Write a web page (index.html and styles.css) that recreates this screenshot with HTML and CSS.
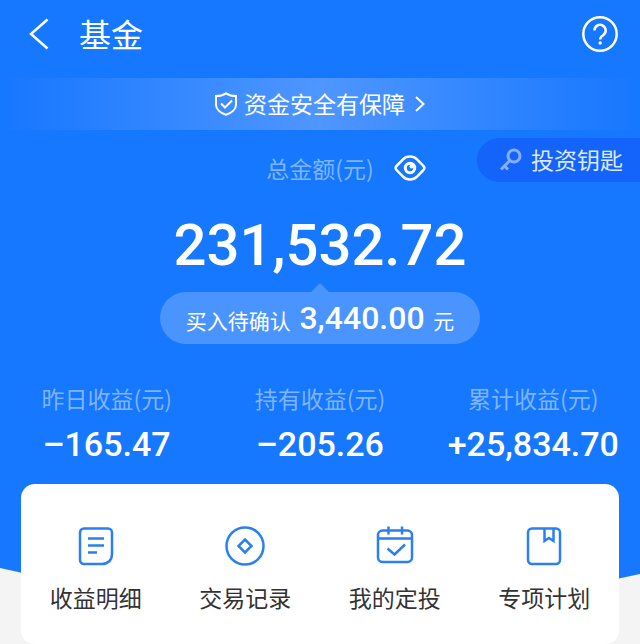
FILE: index.html
```
<!DOCTYPE html>
<html lang="zh-CN">
<head>
    <meta charset="UTF-8">
    <meta name="viewport" content="width=device-width, initial-scale=1.0">
    <title>基金</title>
    <link rel="stylesheet" href="styles.css">
</head>
<body>
    <main class="page">
        <header class="topbar">
            <button class="icon-btn" type="button" aria-label="返回">
                <svg width="20" height="32" viewBox="0 0 20 32"><path d="M18.500 1.500L2 16l16.500 14.500"/></svg>
            </button>
            <h1>基金</h1>
            <button class="icon-btn help" type="button" aria-label="帮助">
                <svg width="38" height="38" viewBox="0 0 38 38">
                    <circle cx="19" cy="19" r="16.700"/>
                    <path d="M13.500 15.500a5.600 5.600 0 1 1 8.600 4.700c-2 1.300-3 2.200-3 4.400"/>
                    <circle class="solid" cx="19.200" cy="28" r="1.700"/>
                </svg>
            </button>
        </header>

        <a class="safety" href="#">
            <svg width="24" height="24" viewBox="0 0 24 24">
                <path d="M12 1.300c3 2 6.500 2.800 10 2.800v8.600c0 4.500-4.500 8.300-10 10-5.500-1.700-10-5.500-10-10V4.100c3.500 0 7-.8 10-2.800z"/>
                <path d="M7 11.500l4 4 7-7"/>
            </svg>
            <span>资金安全有保障</span>
            <svg class="arrow" width="12" height="18" viewBox="0 0 12 18"><path d="M2 2l7.500 7L2 16"/></svg>
        </a>

        <section class="total">
            <div class="total-label">
                <span>总金额(元)</span>
                <button class="icon-btn" type="button" aria-label="隐藏金额">
                    <svg width="32" height="26" viewBox="0 0 32 26">
                        <path d="M1.500 13c0-1 .7-1.700 1.500-2.500L9 4.300C11 2.300 13 1.500 16 1.500s5 .8 7 2.800l6 6.200c.8.800 1.500 1.500 1.500 2.500s-.7 1.700-1.500 2.500l-6 6.200c-2 2-4 2.800-7 2.800s-5-.8-7-2.800l-6-6.200C2.200 14.700 1.500 14 1.500 13z"/>
                        <circle class="pupil" cx="16" cy="13" r="4.700"/>
                        <circle class="solid" cx="17.500" cy="11.500" r="2"/>
                    </svg>
                </button>
            </div>
            <button class="key-btn" type="button">
                <svg width="24" height="26" viewBox="0 0 24 26"><circle cx="15" cy="9" r="6"/><path d="M10.800 13.500L2 22.500M5.500 19l3.500 3.500"/></svg>
                <span>投资钥匙</span>
            </button>
            <p class="amount">231,532.72</p>
            <p class="pending">买入待确认 <b>3,440.00</b> 元</p>
        </section>

        <dl class="stats">
            <div>
                <dt>昨日收益(元)</dt>
                <dd>–165.47</dd>
            </div>
            <div>
                <dt>持有收益(元)</dt>
                <dd>–205.26</dd>
            </div>
            <div>
                <dt>累计收益(元)</dt>
                <dd>+25,834.70</dd>
            </div>
        </dl>

        <div class="bottom">
            <svg class="curve" viewBox="0 0 640 120" preserveAspectRatio="none"><path d="M0 0H640V90Q330 160 0 84z"/></svg>
            <nav class="menu">
                <a href="#">
                    <svg width="40" height="40" viewBox="0 0 40 40">
                        <path d="M8 2.500h24a4 4 0 0 1 4 4V28c0 6-4 10-10 10H8a4 4 0 0 1-4-4V6.500a4 4 0 0 1 4-4z"/>
                        <path d="M12 12.500h16M12 19.500h16M12 26.500h9"/>
                    </svg>
                    <span>收益明细</span>
                </a>
                <a href="#">
                    <svg width="40" height="40" viewBox="0 0 40 40">
                        <circle cx="20" cy="20" r="18.500"/>
                        <path d="M20 13.500l6.500 6.500-6.500 6.500-6.500-6.500z"/>
                    </svg>
                    <span>交易记录</span>
                </a>
                <a href="#">
                    <svg width="40" height="40" viewBox="0 0 40 40">
                        <rect x="3" y="4.500" width="34" height="31.500" rx="4.500"/>
                        <path d="M3 12.500h34M13.500 .500v8M27 .500v8M12.500 22.500l7 6L30 18.500"/>
                    </svg>
                    <span>我的定投</span>
                </a>
                <a href="#">
                    <svg width="40" height="40" viewBox="0 0 40 40">
                        <rect x="4" y="2.500" width="32" height="35.500" rx="4"/>
                        <path d="M20.500 2.500v12.500l4.500-3 4.500 3V2.500"/>
                    </svg>
                    <span>专项计划</span>
                </a>
            </nav>
        </div>
    </main>
</body>
</html>
```
FILE: styles.css
```
* {
    box-sizing: border-box;
}

body {
    margin: 0;
    background: #f4f4f4;
    color: #fff;
    font-family: "Noto Sans CJK SC", sans-serif;
    font-size: 23px;
    line-height: 32px;
}

h1, p, dl, dd {
    margin: 0;
}

a {
    color: inherit;
    text-decoration: none;
}

button {
    padding: 0;
    border: 0;
    background: none;
    color: inherit;
    font: inherit;
    cursor: pointer;
}

svg {
    display: block;
    flex: none;
    fill: none;
    stroke: currentColor;
    stroke-width: 2.5;
}

.page {
    background: linear-gradient(#1677ff, #1677ff) no-repeat 0 0 / 100% 484px;
}

/* top bar */
.topbar {
    display: flex;
    align-items: center;
    height: 78px;
    padding: 0 21px 10px 29px;
}

.topbar h1 {
    margin-left: 30px;
    padding-bottom: 2px;
    font-size: 32px;
    font-weight: 400;
}

.help {
    margin-left: auto;
}

.solid {
    fill: currentColor;
    stroke: none;
}

.safety {
    display: flex;
    align-items: center;
    justify-content: center;
    gap: 6px;
    height: 52px;
    background: linear-gradient(90deg, #1677ff, #4f96ff 50%, #1677ff);
}

.safety span,
.key-btn span {
    padding-bottom: 2px;
}

.safety svg {
    stroke-width: 2;
}

.safety .arrow {
    margin-left: 3px;
}

/* total amount */
.total {
    position: relative;
    display: flex;
    flex-direction: column;
    align-items: center;
    padding-top: 22px;
}

.total-label {
    display: flex;
    align-items: center;
    gap: 20px;
    padding-left: 52px;
    color: #7fb4ff;
}

.total-label .icon-btn {
    color: #fff;
}

.pupil {
    stroke-width: 3;
}

.key-btn {
    position: absolute;
    top: 8px;
    right: 0;
    display: flex;
    align-items: center;
    gap: 8px;
    height: 44px;
    padding: 0 17px 0 22px;
    border-radius: 22px 0 0 22px;
    background: #1463fa;
    color: #dce9ff;
}

.key-btn svg {
    color: #84afff;
    stroke-width: 3;
}

.amount {
    margin-top: 25px;
    font-family: Roboto, sans-serif;
    font-size: 58px;
    font-weight: 500;
    line-height: 72px;
}

.pending {
    position: relative;
    height: 52px;
    margin-top: 11px;
    padding: 0 26px;
    border-radius: 26px;
    background: #4a94ff;
    font-size: 21px;
    line-height: 52px;
}

.pending b {
    margin: 0 4px;
    font-family: Roboto, sans-serif;
    font-size: 32px;
    font-weight: 500;
}

.pending::before {
    content: "";
    position: absolute;
    left: 50%;
    bottom: 100%;
    margin-left: -9px;
    border: 9px solid transparent;
    border-top: 0;
    border-bottom-color: #4a94ff;
}

/* earnings */
.stats {
    display: grid;
    grid-template-columns: repeat(3, 1fr);
    padding-top: 38px;
    text-align: center;
}

.stats dt {
    color: #7fb4ff;
}

.stats dd {
    margin-top: 10px;
    font-family: Roboto, sans-serif;
    font-size: 34px;
    font-weight: 500;
    line-height: 40px;
}

/* shortcuts */
.bottom {
    position: relative;
    padding: 20px 21px 0;
}

.curve {
    position: absolute;
    top: 20px;
    left: 0;
    width: 100%;
    height: 120px;
}

.curve path {
    fill: #1677ff;
    stroke: none;
}

.menu {
    position: relative;
    display: grid;
    grid-template-columns: repeat(4, 1fr);
    padding: 42px 0 31px;
    border-radius: 14px;
    background: #fff;
    color: #333;
}

.menu a {
    display: flex;
    flex-direction: column;
    align-items: center;
    gap: 15px;
}

.menu svg {
    color: #2b7ff2;
}
```
